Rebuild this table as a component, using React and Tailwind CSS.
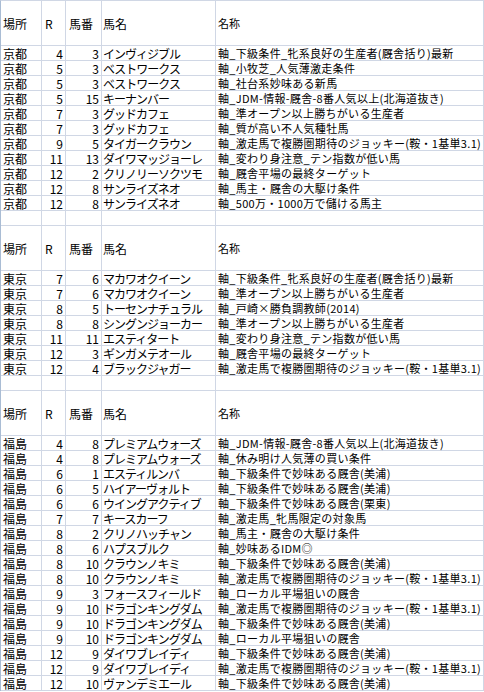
import React from "react";

const sections = [
  {
    place: "京都",
    rows: [
      [4, 3, "インヴィジブル", "軸_下級条件_牝系良好の生産者(厩舎括り)最新"],
      [5, 3, "ベストワークス", "軸_小牧芝_人気薄激走条件"],
      [5, 3, "ベストワークス", "軸_社台系妙味ある新馬"],
      [5, 15, "キーナンバー", "軸_JDM-情報-厩舎-8番人気以上(北海道抜き)"],
      [7, 3, "グッドカフェ", "軸_準オープン以上勝ちがいる生産者"],
      [7, 3, "グッドカフェ", "軸_質が高い不人気種牡馬"],
      [9, 5, "タイガークラウン", "軸_激走馬で複勝圏期待のジョッキー(鞍・1基単3.1)"],
      [11, 13, "ダイワマッジョーレ", "軸_変わり身注意_テン指数が低い馬"],
      [12, 2, "クリノリーソクツモ", "軸_厩舎平場の最終ターゲット"],
      [12, 8, "サンライズネオ", "軸_馬主・厩舎の大駆け条件"],
      [12, 8, "サンライズネオ", "軸_500万・1000万で儲ける馬主"],
    ],
  },
  {
    place: "東京",
    rows: [
      [7, 6, "マカワオクイーン", "軸_下級条件_牝系良好の生産者(厩舎括り)最新"],
      [7, 6, "マカワオクイーン", "軸_準オープン以上勝ちがいる生産者"],
      [8, 5, "トーセンナチュラル", "軸_戸崎×勝負調教師(2014)"],
      [8, 8, "シングンジョーカー", "軸_準オープン以上勝ちがいる生産者"],
      [11, 11, "エスティタート", "軸_変わり身注意_テン指数が低い馬"],
      [12, 3, "ギンガメテオール", "軸_厩舎平場の最終ターゲット"],
      [12, 4, "ブラックジャガー", "軸_激走馬で複勝圏期待のジョッキー(鞍・1基単3.1)"],
    ],
  },
  {
    place: "福島",
    rows: [
      [4, 8, "プレミアムウォーズ", "軸_JDM-情報-厩舎-8番人気以上(北海道抜き)"],
      [4, 8, "プレミアムウォーズ", "軸_休み明け人気薄の買い条件"],
      [6, 1, "エスティルンバ", "軸_下級条件で妙味ある厩舎(美浦)"],
      [6, 5, "ハイアーヴォルト", "軸_下級条件で妙味ある厩舎(美浦)"],
      [6, 6, "ウイングアクティブ", "軸_下級条件で妙味ある厩舎(栗東)"],
      [7, 7, "キースカーフ", "軸_激走馬_牝馬限定の対象馬"],
      [8, 2, "クリノハッチャン", "軸_馬主・厩舎の大駆け条件"],
      [8, 6, "ハプスブルク", "軸_妙味あるIDM◎"],
      [8, 10, "クラウンノキミ", "軸_下級条件で妙味ある厩舎(美浦)"],
      [8, 10, "クラウンノキミ", "軸_激走馬で複勝圏期待のジョッキー(鞍・1基単3.1)"],
      [9, 3, "フォースフィールド", "軸_ローカル平場狙いの厩舎"],
      [9, 10, "ドラゴンキングダム", "軸_激走馬で複勝圏期待のジョッキー(鞍・1基単3.1)"],
      [9, 10, "ドラゴンキングダム", "軸_下級条件で妙味ある厩舎(美浦)"],
      [9, 10, "ドラゴンキングダム", "軸_ローカル平場狙いの厩舎"],
      [12, 9, "ダイワブレイディ", "軸_下級条件で妙味ある厩舎(美浦)"],
      [12, 9, "ダイワブレイディ", "軸_激走馬で複勝圏期待のジョッキー(鞍・1基単3.1)"],
      [12, 10, "ヴァンデミエール", "軸_下級条件で妙味ある厩舎(美浦)"],
    ],
  },
];

const cell =
  "flex items-center whitespace-nowrap border-r border-b border-[#d0d7e5] leading-[13px]";

function Row({ tall, values }) {
  const h = tall ? "h-[45px]" : "h-[15px]";
  const [a, b, c, d, e] = values || ["", "", "", "", ""];
  const isNum = !tall && values;
  return (
    <div className={`grid grid-cols-[41px_24px_36px_114px_1fr] ${h}`}>
      <div className={`${cell} pl-[2px] text-[12px]`}>{a}</div>
      <div className={`${cell} text-[12px] ${isNum ? "justify-end pr-[2px]" : "pl-[3px]"}`}>{b}</div>
      <div className={`${cell} text-[12px] ${isNum ? "justify-end pr-[2px]" : "pl-[3px]"}`}>{c}</div>
      <div className={`${cell} pl-[1px] text-[12px] ${isNum ? "tracking-[-1px]" : ""}`}>{d}</div>
      <div className={`${cell} pl-[2px] text-[11px] ${isNum ? "tracking-[0.3px]" : ""}`}>{e}</div>
    </div>
  );
}

export default function App() {
  return (
    <div className="w-[484px] h-[692px] overflow-hidden bg-white text-black font-['Noto_Sans_CJK_JP','Noto_Sans',sans-serif]">
      <div className="border-t border-l border-t-[#d0d7e5] border-l-[#a9bcd4]">
        {sections.map((s, i) => (
          <div key={s.place}>
            {i > 0 && <Row />}
            <Row tall values={["場所", "R", "馬番", "馬名", "名称"]} />
            {s.rows.map((r, j) => (
              <Row key={j} values={[s.place, r[0], r[1], r[2], r[3]]} />
            ))}
          </div>
        ))}
      </div>
    </div>
  );
}
